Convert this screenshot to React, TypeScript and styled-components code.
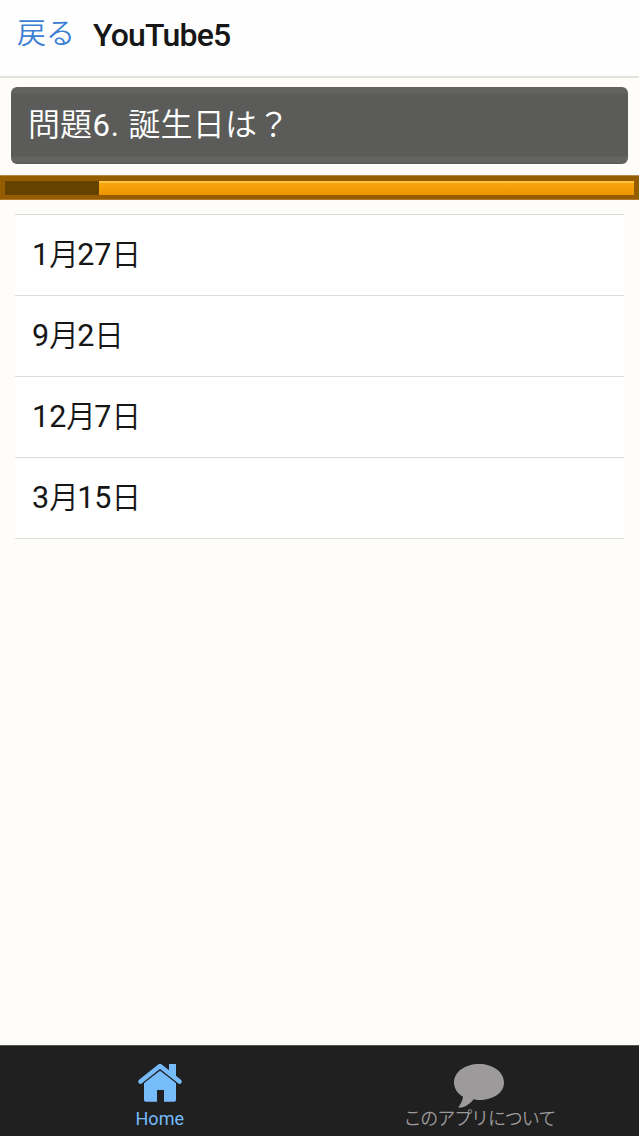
import React from "react";
import styled, { createGlobalStyle } from "styled-components";

const GlobalStyle = createGlobalStyle`
  *, *::before, *::after { box-sizing: border-box; }
  body {
    margin: 0;
    background: #fffdf9;
    font-family: Roboto, "Noto Sans CJK JP", sans-serif;
    color: #161616;
  }
`;

const Screen = styled.div`
  display: flex;
  flex-direction: column;
  height: 1136px;
  overflow: hidden;
`;

const Header = styled.header`
  display: flex;
  height: 78px;
  flex: none;
  padding-left: 17px;
  background: #fefefe;
  border-bottom: 2px solid #e2e2df;
`;

const BackButton = styled.a`
  width: 76px;
  padding-top: 4px;
  font-size: 29px;
  font-weight: 350;
  line-height: 60px;
  color: #3b7fd4;
`;

const Title = styled.h1`
  margin: 0;
  padding-top: 5px;
  font-size: 32px;
  font-weight: 500;
  line-height: 60px;
  letter-spacing: -0.8px;
`;

const Question = styled.div`
  flex: none;
  height: 77px;
  margin: 9px 11px 11px;
  padding-left: 17px;
  border-radius: 6px;
  background: linear-gradient(#626360 0 6px, #5b5c5a 7px 69px, #646462 70px 75px, #575755);
  color: #fff;
  font-size: 31px;
  font-weight: 400;
  line-height: 77px;
  white-space: pre;
`;

const Glyphs = styled.span<{ $size: number; $spacing?: number }>`
  font-size: ${(p) => p.$size}px;
  font-weight: 350;
  letter-spacing: ${(p) => p.$spacing ?? 0}px;
`;

const Numbering = styled.span`
  margin-left: 0.5px;
  letter-spacing: 0.8px;
`;

const Timer = styled.div`
  flex: none;
  display: flex;
  height: 25px;
  padding: 6px 5px 5px;
  background: linear-gradient(#b98a45 0 1px, #955d00 1px 24px, #b07a2a 24px);
`;

const Elapsed = styled.div`
  width: 94px;
  height: 14px;
  background: #644200;
`;

const Remaining = styled.div`
  flex: 1;
  height: 14px;
  background: linear-gradient(#ffc33e 0 2px, #fba60e 2px, #ec9500);
`;

const Choices = styled.ul`
  list-style: none;
  margin: 14px 15px 0;
  padding: 0;
  background: #fff;
  border-top: 1px solid #dadada;
`;

const Choice = styled.li`
  height: 81px;
  padding-left: 17px;
  border-bottom: 1px solid #dcdcdc;
  font-size: 30.5px;
  font-weight: 400;
  line-height: 79px;
`;

const TabBar = styled.nav`
  display: flex;
  flex: none;
  height: 91px;
  margin-top: auto;
  background: #202020;
  border-top: 1px solid #555;
`;

const Tab = styled.a<{ $active?: boolean }>`
  flex: 1;
  display: flex;
  flex-direction: column;
  align-items: center;
  padding-top: 15px;
  color: ${(p) => (p.$active ? "#76bcfb" : "#9d9a9b")};
`;

const TabIcon = styled.svg`
  display: block;
  height: 46px;
  fill: currentColor;
`;

const TabLabel = styled.span<{ $spacing: number; $weight: number }>`
  font-size: 18px;
  font-weight: ${(p) => p.$weight};
  line-height: 24px;
  letter-spacing: ${(p) => p.$spacing}px;
`;

const answers = ["1月27日", "9月2日", "12月7日", "3月15日"];

const AnswerText = ({ text }: { text: string }) => (
  <>
    {text.split(/([月日])/).map((part, i) =>
      /[月日]/.test(part) ? (
        <Glyphs key={i} $size={29.5} $spacing={-1.5}>{part}</Glyphs>
      ) : (
        part
      ),
    )}
  </>
);

export default function App() {
  return (
    <Screen>
      <GlobalStyle />
      <Header>
        <BackButton>戻る</BackButton>
        <Title>YouTube5</Title>
      </Header>
      <Question>
        <Glyphs $size={32}>問題</Glyphs>
        <Numbering>6. </Numbering>
        <Glyphs $size={32} $spacing={0.3}>誕生日は？</Glyphs>
      </Question>
      <Timer>
        <Elapsed />
        <Remaining />
      </Timer>
      <Choices>
        {answers.map((answer) => (
          <Choice key={answer}>
            <AnswerText text={answer} />
          </Choice>
        ))}
      </Choices>
      <TabBar>
        <Tab $active>
          <TabIcon width="46" viewBox="0 0 46 46">
            <path d="M7 22 23 8l16 14v17q0 1.800-1.800 1.800H27V29h-7v11.800H8.800Q7 40.800 7 39Z" />
            <path d="M3 20 23 4.500 43 20" fill="none" stroke="#202020" strokeWidth="8" />
            <path d="M32 3h7v13l-7-6Z" />
            <path d="M3.500 20.500 23 5 42.500 20.500" fill="none" stroke="currentColor" strokeWidth="4.600" strokeLinecap="round" strokeLinejoin="round" />
          </TabIcon>
          <TabLabel $spacing={0} $weight={400}>Home</TabLabel>
        </Tab>
        <Tab>
          <TabIcon width="52" viewBox="0 0 52 46" overflow="visible">
            <path d="M26 3C12 3 1 11 1 21.500c0 6 3.500 11 9 14.200-.5 4-2.500 8-5 10.800 6 .8 12-3.500 15.500-8.300 2 .4 3.500.8 5.500.8 14 0 25-7 25-17.500S40 3 26 3Z" />
          </TabIcon>
          <TabLabel $spacing={-1.1} $weight={350}>このアプリについて</TabLabel>
        </Tab>
      </TabBar>
    </Screen>
  );
}
